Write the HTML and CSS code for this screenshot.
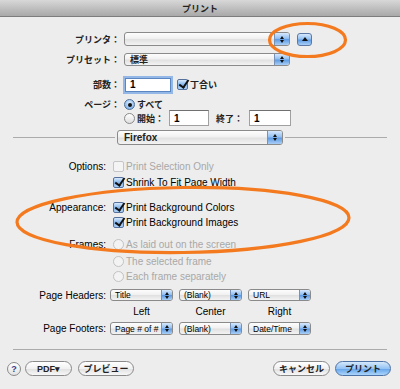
FILE: index.html
```html
<!DOCTYPE html>
<html lang="ja">
<head>
<meta charset="utf-8"/>
<title>プリント</title>
<link rel="stylesheet" href="styles.css">
</head>
<body>
<div class="titlebar">プリント</div>

<div class="sheet">

  <!-- プリンタ / プリセット ------------------------------------------------>
  <div class="row r-printer">
    <span class="lbl">プリンタ：</span>
    <div class="popup main"><span class="val"></span><span class="step"></span></div>
    <span class="disclose"></span>
  </div>
  <div class="row r-preset">
    <span class="lbl">プリセット：</span>
    <div class="popup main"><span class="val jp">標準</span><span class="step"></span></div>
  </div>

  <!-- 部数 / ページ ------------------------------------------------------->
  <div class="row r-copies">
    <span class="lbl">部数：</span>
    <span class="field focus copies">1</span>
    <span class="cb on collate"></span><span class="opt">丁合い</span>
  </div>
  <div class="row r-all">
    <span class="lbl">ページ：</span>
    <span class="rb on"></span><span class="opt">すべて</span>
  </div>
  <div class="row r-range">
    <span class="lbl"></span>
    <span class="rb"></span><span class="opt">開始：</span>
    <span class="field from">1</span>
    <span class="opt to-lbl">終了：</span>
    <span class="field to">1</span>
  </div>

  <div class="sep-row">
    <span class="line"></span>
    <div class="popup main ff"><span class="val">Firefox</span><span class="step"></span></div>
    <span class="line"></span>
  </div>

  <!-- Firefox panel ------------------------------------------------------->
  <div class="row2 r-options">
    <span class="lbl2">Options:</span>
    <span class="cb off"></span><span class="opt dim">Print Selection Only</span>
  </div>
  <div class="row2 r-shrink">
    <span class="lbl2"></span>
    <span class="cb on"></span><span class="opt">Shrink To Fit Page Width</span>
  </div>
  <div class="row2 r-appear">
    <span class="lbl2">Appearance:</span>
    <span class="cb on"></span><span class="opt">Print Background Colors</span>
  </div>
  <div class="row2 r-images">
    <span class="lbl2"></span>
    <span class="cb on"></span><span class="opt">Print Background Images</span>
  </div>
  <div class="row2 r-frames">
    <span class="lbl2">Frames:</span>
    <span class="rb off"></span><span class="opt dim">As laid out on the screen</span>
  </div>
  <div class="row2 r-frame2">
    <span class="lbl2"></span>
    <span class="rb off"></span><span class="opt dim">The selected frame</span>
  </div>
  <div class="row2 r-frame3">
    <span class="lbl2"></span>
    <span class="rb off"></span><span class="opt dim">Each frame separately</span>
  </div>

  <div class="row3 r-headers">
    <span class="lbl3">Page Headers:</span>
    <div class="popup small"><span class="val">Title</span><span class="step"></span></div>
    <div class="popup small"><span class="val">(Blank)</span><span class="step"></span></div>
    <div class="popup small"><span class="val">URL</span><span class="step"></span></div>
  </div>
  <div class="row3 r-cols">
    <span class="lbl3"></span>
    <span class="col">Left</span>
    <span class="col">Center</span>
    <span class="col">Right</span>
  </div>
  <div class="row3 r-footers">
    <span class="lbl3">Page Footers:</span>
    <div class="popup small"><span class="val">Page # of #</span><span class="step"></span></div>
    <div class="popup small"><span class="val">(Blank)</span><span class="step"></span></div>
    <div class="popup small"><span class="val">Date/Time</span><span class="step"></span></div>
  </div>

  <div class="hr"></div>

  <!-- buttons ------------------------------------------------------------->
  <div class="buttons">
    <div class="group">
      <span class="help">?</span>
      <span class="btn pdf">PDF▾</span>
      <span class="btn preview">プレビュー</span>
    </div>
    <div class="group">
      <span class="btn cancel">キャンセル</span>
      <span class="btn default print">プリント</span>
    </div>
  </div>
</div>

<!-- annotation rings drawn over the dialog -->
<svg class="marks" viewBox="0 0 400 389">
  <ellipse cx="307.5" cy="40" rx="38" ry="16.5"/>
  <ellipse cx="183" cy="220" rx="166" ry="32.5" transform="rotate(-0.8 183 220)"/>
</svg>
</body>
</html>
```

FILE: styles.css
```css
*{margin:0;padding:0;box-sizing:border-box}
body{
  width:400px;
  height:389px;
  overflow:hidden;
  position:relative;
  background:#ededed;
  font-family:"Liberation Sans","Noto Sans CJK JP",sans-serif;
  font-size:10px;
  color:#000;
}
.titlebar{
  height:17px;
  background:linear-gradient(#d8d8d8,#c0c0c0 50%,#a9a9a9);
  border-bottom:1px solid #7d7d7d;
  display:flex;
  align-items:center;
  justify-content:center;
  font-size:9px;
  font-weight:bold;
  color:#222;
}
.sheet{display:flex;flex-direction:column}

/* rows ---------------------------------------------------------------------*/
.row,.row2,.row3{display:flex;align-items:center}
.lbl{
  width:120px;
  margin-right:4px;
  text-align:right;
  font-size:9px;
  font-weight:bold;
  color:#222;
  flex:none;
}
.lbl2{width:106px;margin-right:7px;text-align:right;flex:none}
.lbl3{width:106px;margin-right:4px;text-align:right;flex:none}
.opt{margin-left:2px;white-space:nowrap}
.row .opt{font-size:9px;font-weight:bold;color:#222}
.dim{color:#a8a8a8}

.r-printer{height:14px;margin-top:15px}
.r-preset{height:13px;margin-top:7px}
.r-copies{height:15px;margin-top:11px}
.r-all{height:11px;margin-top:7px}
.r-range{height:16px}
.r-options{height:12px;margin-top:15px}
.r-shrink{height:12px;margin-top:4px}
.r-appear{height:12px;margin-top:13px}
.r-images{height:12px;margin-top:3px}
.r-frames{height:12px;margin-top:10px}
.r-frame2{height:12px;margin-top:5px}
.r-frame3{height:12px;margin-top:3px}
.r-headers{height:12px;margin-top:7px;gap:6px}
.r-headers .lbl3,.r-footers .lbl3,.r-cols .lbl3{margin-right:-2px}
.r-cols{height:12px;margin-top:4px;gap:6px}
.r-footers{height:13px;margin-top:5px;gap:6px}
.col{width:63px;text-align:center}

/* popups -------------------------------------------------------------------*/
.popup{
  display:flex;
  align-items:stretch;
  height:100%;
  border:1px solid #8a8a8a;
  border-radius:3px;
  background:linear-gradient(#fdfdfd,#f1f1f1 45%,#e1e1e1 55%,#f3f3f3);
  overflow:hidden;
  flex:none;
}
.popup .val{
  flex:1;
  display:flex;
  align-items:center;
  padding-left:5px;
  font-size:9px;
  white-space:nowrap;
  overflow:hidden;
}
.popup .val.jp{font-weight:bold;color:#222}
.popup .step{
  width:15px;
  border-left:1px solid #7891b6;
  background:linear-gradient(#d6e8fc,#93c0f3 45%,#5f9be3 55%,#a9cff7);
  display:flex;
  flex-direction:column;
  align-items:center;
  justify-content:center;
  gap:1px;
}
.step::before{content:"";border-left:2px solid transparent;border-right:2px solid transparent;border-bottom:3px solid #111}
.step::after{content:"";border-left:2px solid transparent;border-right:2px solid transparent;border-top:3px solid #111}
.popup.main{width:166px}
.popup.ff{height:15px}
.popup.ff .val{font-size:10px;font-weight:bold;color:#222;padding-left:6px}
.popup.small{width:63px}
.popup.small .val{font-size:8.5px;padding-left:4px}
.popup.small .step{width:11px}

.disclose{
  width:15px;
  height:13px;
  margin-left:7px;
  border:1px solid #5c79a3;
  border-radius:3px;
  background:linear-gradient(#d6e8fc,#93c0f3 45%,#5f9be3 55%,#a9cff7);
  display:flex;
  align-items:center;
  justify-content:center;
}
.disclose::after{content:"";border-left:3px solid transparent;border-right:3px solid transparent;border-bottom:4px solid #111}

/* fields, boxes, radios ----------------------------------------------------*/
.field{
  height:16px;
  background:#fff;
  border:1px solid #a0a0a0;
  border-top-color:#707070;
  display:flex;
  align-items:center;
  padding-left:4px;
  font-size:10px;
  font-weight:bold;
  flex:none;
}
.field.focus{border-color:#5b86c2;box-shadow:0 0 0 2px #93b8e8}
.copies{width:46px;height:14px;margin-left:1px}
.from{width:40px;margin-left:5px}
.to-lbl{margin-left:7px}
.to{width:42px;margin-left:6px}

.cb{
  width:11px;
  height:11px;
  border:1px solid #8896a8;
  border-radius:2px;
  background:linear-gradient(#fff,#e4e4e4);
  position:relative;
  flex:none;
}
.cb.on{background:linear-gradient(#d8eafc,#86b6ee 50%,#aad0f7);border-color:#56719b}
.cb.on::after{
  content:"";
  position:absolute;
  left:3px;
  top:-2px;
  width:4px;
  height:8px;
  border-right:2px solid #111;
  border-bottom:2px solid #111;
  transform:rotate(35deg);
}
.cb.off{border-color:#c6c6c6;background:#f4f4f4}
.collate{margin-left:6px}

.rb{
  width:11px;
  height:11px;
  border-radius:50%;
  border:1px solid #8a8a8a;
  background:linear-gradient(#fff,#dedede);
  display:flex;
  align-items:center;
  justify-content:center;
  flex:none;
}
.rb.on{background:radial-gradient(circle at 50% 35%,#dcedfd,#6aa2e6);border-color:#4f6f99}
.rb.on::after{content:"";width:4px;height:4px;border-radius:50%;background:#111}
.rb.off{border-color:#c2c2c2;background:#f3f3f3}

/* separators ---------------------------------------------------------------*/
.sep-row{display:flex;align-items:center;height:15px;margin-top:4px;padding:0 13px}
.sep-row .line{flex:1;height:1px;background:#ababab}
.sep-row .popup{margin:0 2px}
.hr{height:1px;margin:14px 13px 0;background:#ababab}

/* buttons ------------------------------------------------------------------*/
.buttons{
  display:flex;
  justify-content:space-between;
  align-items:center;
  height:15px;
  margin-top:11px;
  padding:0 9px 0 7px;
}
.group{display:flex;align-items:center;gap:5px}
.btn{
  height:15px;
  border:1px solid #8a8a8a;
  border-radius:8px;
  background:linear-gradient(#fff,#f1f1f1 50%,#e0e0e0 52%,#f8f8f8);
  display:flex;
  align-items:center;
  justify-content:center;
  font-size:9px;
  font-weight:bold;
  color:#222;
}
.btn.default{background:linear-gradient(#d6e9fc,#94c3f4 50%,#63a3ea 52%,#acd5fb);border-color:#4d72a5}
.help{
  width:14px;
  height:14px;
  border-radius:50%;
  border:1px solid #8a8a8a;
  background:linear-gradient(#fff,#e2e2e2);
  display:flex;
  align-items:center;
  justify-content:center;
  font-size:9px;
  font-weight:bold;
  color:#3b3b8c;
  margin-right:-1px;
}
.pdf{width:47px}
.preview{width:56px;margin-left:1px}
.cancel{width:57px}
.print{width:56px}

/* annotation rings ---------------------------------------------------------*/
.marks{
  position:absolute;
  left:0;
  top:0;
  width:400px;
  height:389px;
  pointer-events:none;
}
.marks ellipse{fill:none;stroke:#f47a1f;stroke-width:3.2}
```
